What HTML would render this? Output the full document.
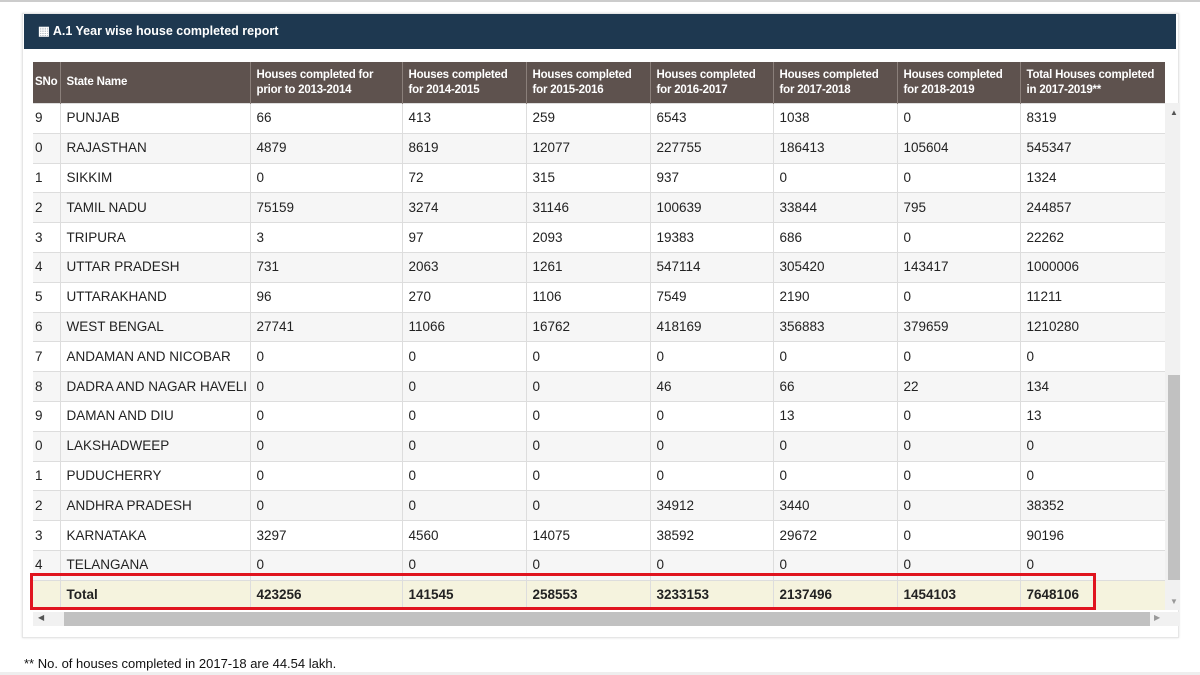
<!DOCTYPE html><html><head><style>
body{margin:0;width:1200px;height:675px;background:#fff;font-family:"Liberation Sans",sans-serif;position:relative;overflow:hidden;font-size:13px;color:#222}
.top{position:absolute;left:0;top:0;width:1200px;height:2px;background:#ccc}
.panel{position:absolute;left:22px;top:13px;width:1155px;height:623px;border:1px solid #e6e6e6;box-shadow:0 0 2px #ddd}
.hdr{position:absolute;left:24px;top:14px;width:1152px;height:35px;background:#1e3850;color:#fff;font-size:12.5px;font-weight:bold;line-height:35px}
.hdr span{margin-left:14px}
table{position:absolute;left:33px;top:62px;border-collapse:collapse;table-layout:fixed;width:1132px}
th{background:#5e524e;color:#fff;font-size:11.5px;text-align:left;padding:0 6px;height:41px;border-left:1px solid #8a7f7a;line-height:15px;font-weight:bold;vertical-align:middle;white-space:nowrap;overflow:hidden;letter-spacing:-0.2px}
td{height:28.8px;padding:0 6px;border-left:1px solid #ddd;border-top:1px solid #ddd;font-size:13.5px;white-space:nowrap;overflow:hidden;line-height:16px}
td:first-child,th:first-child{border-left:none;padding:0 2px}
tr:nth-child(odd) td{background:#f6f6f6}
tr.tot td{background:#f5f3de;font-weight:bold}
.vs{position:absolute;left:1165px;top:103px;width:15px;height:507px;background:#f1f1f1}
.vt{position:absolute;left:1168px;top:375px;width:12px;height:205px;background:#c1c1c1}
.hs{position:absolute;left:33px;top:612px;width:1147px;height:14px;background:#f1f1f1}
.ht{position:absolute;left:64px;top:612px;width:1086px;height:14px;background:#c1c1c1}
.red{position:absolute;left:30px;top:573px;width:1060px;height:31px;border:3px solid #e0141e}
.foot{position:absolute;left:24px;top:656px;font-size:13px;color:#111}
.bot{position:absolute;left:0;top:672px;width:1200px;height:3px;background:#eee}
</style></head><body>
<div class="top"></div>
<div class="panel"></div>
<div class="hdr"><span>▦ A.1 Year wise house completed report</span></div>
<table>
<colgroup><col style="width:27px"><col style="width:190px"><col style="width:152px"><col style="width:124px"><col style="width:124px"><col style="width:123px"><col style="width:124px"><col style="width:123px"><col style="width:145px"></colgroup>
<tr><th>SNo</th><th>State Name</th><th>Houses completed for<br>prior to 2013-2014</th><th>Houses completed<br>for 2014-2015</th><th>Houses completed<br>for 2015-2016</th><th>Houses completed<br>for 2016-2017</th><th>Houses completed<br>for 2017-2018</th><th>Houses completed<br>for 2018-2019</th><th>Total Houses completed<br>in 2017-2019**</th></tr>
<tr><td>9</td><td>PUNJAB</td><td>66</td><td>413</td><td>259</td><td>6543</td><td>1038</td><td>0</td><td>8319</td></tr>
<tr><td>0</td><td>RAJASTHAN</td><td>4879</td><td>8619</td><td>12077</td><td>227755</td><td>186413</td><td>105604</td><td>545347</td></tr>
<tr><td>1</td><td>SIKKIM</td><td>0</td><td>72</td><td>315</td><td>937</td><td>0</td><td>0</td><td>1324</td></tr>
<tr><td>2</td><td>TAMIL NADU</td><td>75159</td><td>3274</td><td>31146</td><td>100639</td><td>33844</td><td>795</td><td>244857</td></tr>
<tr><td>3</td><td>TRIPURA</td><td>3</td><td>97</td><td>2093</td><td>19383</td><td>686</td><td>0</td><td>22262</td></tr>
<tr><td>4</td><td>UTTAR PRADESH</td><td>731</td><td>2063</td><td>1261</td><td>547114</td><td>305420</td><td>143417</td><td>1000006</td></tr>
<tr><td>5</td><td>UTTARAKHAND</td><td>96</td><td>270</td><td>1106</td><td>7549</td><td>2190</td><td>0</td><td>11211</td></tr>
<tr><td>6</td><td>WEST BENGAL</td><td>27741</td><td>11066</td><td>16762</td><td>418169</td><td>356883</td><td>379659</td><td>1210280</td></tr>
<tr><td>7</td><td>ANDAMAN AND NICOBAR</td><td>0</td><td>0</td><td>0</td><td>0</td><td>0</td><td>0</td><td>0</td></tr>
<tr><td>8</td><td>DADRA AND NAGAR HAVELI</td><td>0</td><td>0</td><td>0</td><td>46</td><td>66</td><td>22</td><td>134</td></tr>
<tr><td>9</td><td>DAMAN AND DIU</td><td>0</td><td>0</td><td>0</td><td>0</td><td>13</td><td>0</td><td>13</td></tr>
<tr><td>0</td><td>LAKSHADWEEP</td><td>0</td><td>0</td><td>0</td><td>0</td><td>0</td><td>0</td><td>0</td></tr>
<tr><td>1</td><td>PUDUCHERRY</td><td>0</td><td>0</td><td>0</td><td>0</td><td>0</td><td>0</td><td>0</td></tr>
<tr><td>2</td><td>ANDHRA PRADESH</td><td>0</td><td>0</td><td>0</td><td>34912</td><td>3440</td><td>0</td><td>38352</td></tr>
<tr><td>3</td><td>KARNATAKA</td><td>3297</td><td>4560</td><td>14075</td><td>38592</td><td>29672</td><td>0</td><td>90196</td></tr>
<tr><td>4</td><td>TELANGANA</td><td>0</td><td>0</td><td>0</td><td>0</td><td>0</td><td>0</td><td>0</td></tr>
<tr class="tot"><td></td><td>Total</td><td>423256</td><td>141545</td><td>258553</td><td>3233153</td><td>2137496</td><td>1454103</td><td>7648106</td></tr>
</table>
<div class="vs"></div><div class="vt"></div>
<div style="position:absolute;left:1170px;top:108px;font-size:8px;color:#555">▲</div>
<div style="position:absolute;left:1170px;top:597px;font-size:8px;color:#999">▼</div>
<div class="hs"></div><div class="ht"></div>
<div style="position:absolute;left:38px;top:613px;font-size:8px;color:#555">◀</div>
<div style="position:absolute;left:1154px;top:613px;font-size:8px;color:#999">▶</div>
<div class="red"></div>
<div class="foot">** No. of houses completed in 2017-18 are 44.54 lakh.</div>
<div class="bot"></div>
</body></html>
